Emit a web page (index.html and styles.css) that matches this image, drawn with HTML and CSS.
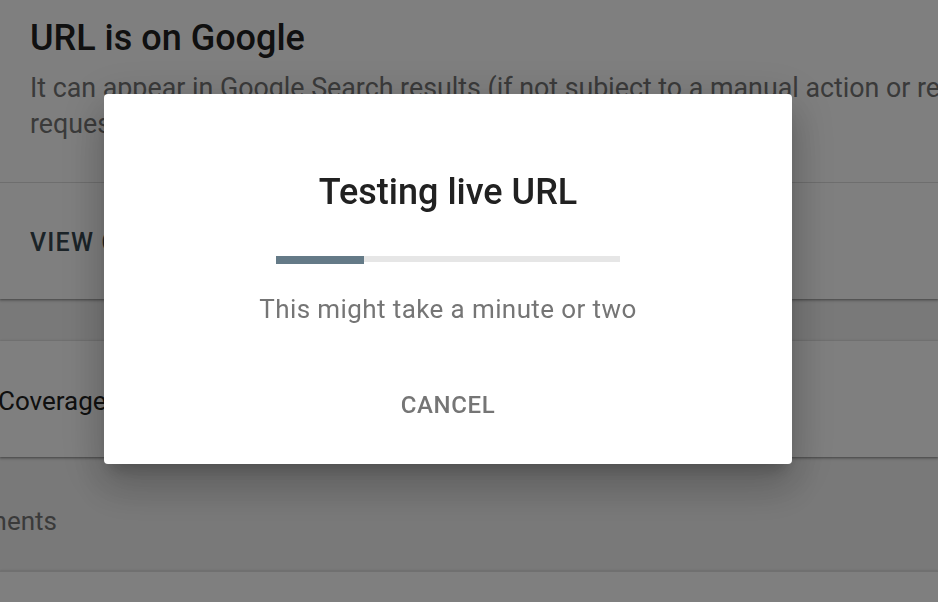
FILE: index.html
```html
<!DOCTYPE html>
<html lang="en">
<head>
<meta charset="utf-8">
<title>Testing live URL</title>
<link rel="stylesheet" href="styles.css">
</head>
<body>
<main class="page">
  <section class="card card-status">
    <div class="status-head">
      <h1 class="status-title">URL is on Google</h1>
      <p class="status-desc">It can appear in Google Search results (if not subject to a manual action or removal<br>request).</p>
    </div>
    <div class="status-actions">
      <span class="text-button">VIEW CRAWLED PAGE</span>
    </div>
  </section>
  <section class="card card-row">
    <span class="row-label coverage">Coverage</span>
  </section>
  <div class="section-head">
    <div class="clip-right"><span class="row-label muted">Enhancements</span></div>
  </div>
  <section class="card card-bottom"></section>
</main>
<div class="scrim"></div>
<div class="dialog" role="dialog" aria-label="Testing live URL">
  <h2 class="dialog-title">Testing live URL</h2>
  <div class="progress">
    <div class="progress-fill"></div>
    <div class="progress-track"></div>
  </div>
  <p class="dialog-text">This might take a minute or two</p>
  <span class="dialog-button">CANCEL</span>
</div>
</body>
</html>
```
FILE: styles.css
```css
* { box-sizing: border-box; }
html, body { margin: 0; padding: 0; }
body {
  width: 938px;
  height: 602px;
  overflow: hidden;
  background: #f3f3f3;
  font-family: Roboto, "Noto Sans", "Liberation Sans", sans-serif;
  color: #212121;
}
.page {
  display: flex;
  flex-direction: column;
}
.card {
  background: #fff;
  box-shadow: 0 1px 2px rgba(0,0,0,0.3), 0 1px 3px 1px rgba(0,0,0,0.15);
}
.status-head {
  padding: 18px 30px 40px;
  border-bottom: 1px solid #dcdcdc;
}
.status-title {
  margin: 0;
  font-size: 36px;
  line-height: 40px;
  font-weight: 500;
  color: #212121;
  white-space: nowrap;
}
.status-desc {
  margin: 12px 0 0;
  font-size: 26.8px;
  line-height: 36px;
  color: #757575;
  white-space: nowrap;
}
.status-actions {
  height: 116px;
  display: flex;
  align-items: center;
  padding-left: 30px;
  padding-top: 3px;
}
.text-button {
  font-size: 25px;
  font-weight: 500;
  letter-spacing: 1.2px;
  color: #37474f;
}
.card-row {
  margin-top: 42px;
  height: 116px;
  display: flex;
  align-items: center;
  padding-top: 3px;
}
.row-label {
  font-size: 26px;
  line-height: 32px;
  white-space: nowrap;
}
.coverage { margin-left: -2px; color: #212121; }
.section-head {
  height: 114px;
  display: flex;
  align-items: center;
}
.clip-right {
  width: 57px;
  display: flex;
  justify-content: flex-end;
  padding-top: 14px;
}
.muted { color: #757575; }
.card-bottom {
  height: 80px;
  border-top: 1px solid #e0e0e0;
}
.scrim {
  position: fixed;
  inset: 0;
  background: rgba(0,0,0,0.5);
}
.dialog {
  position: fixed;
  left: 104px;
  top: 94px;
  width: 688px;
  height: 370px;
  background: #fff;
  border-radius: 4px;
  box-shadow: 0 11px 15px -7px rgba(0,0,0,0.2), 0 24px 38px 3px rgba(0,0,0,0.14), 0 9px 46px 8px rgba(0,0,0,0.12);
  display: flex;
  flex-direction: column;
  align-items: center;
  padding-top: 76px;
}
.dialog-title {
  margin: 0;
  font-size: 36px;
  line-height: 44px;
  font-weight: 500;
  color: #212121;
}
.progress {
  margin-top: 42px;
  width: 344px;
  display: flex;
  align-items: flex-start;
}
.progress-fill {
  width: 88px;
  height: 8px;
  background: #647a87;
}
.progress-track {
  flex: 1;
  height: 6px;
  background: #e6e6e6;
}
.dialog-text {
  margin: 29px 0 0;
  font-size: 26px;
  line-height: 32px;
  letter-spacing: 0.4px;
  color: #757575;
}
.dialog-button {
  margin-top: 62px;
  font-size: 24px;
  line-height: 36px;
  font-weight: 500;
  letter-spacing: 0.6px;
  color: #757575;
}
```
